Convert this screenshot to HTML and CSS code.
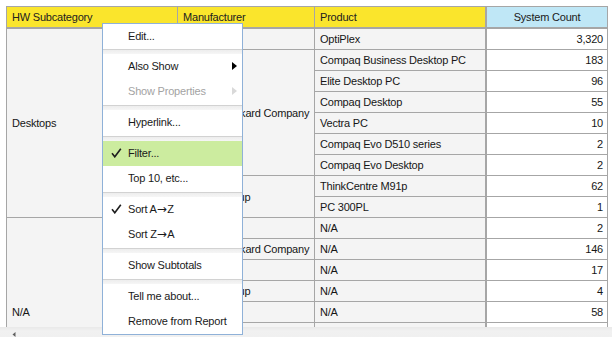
FILE: index.html
```html
<!DOCTYPE html>
<html>
<head>
<meta charset="utf-8">
<link rel="stylesheet" href="styles.css">
</head>
<body>
<div class="report">
  <div class="viewport">
    <div class="grid">
      <div class="hd">HW Subcategory</div>
      <div class="hd">Manufacturer</div>
      <div class="hd">Product</div>
      <div class="hd hd-measure">System Count</div>

      <div class="dim span9">Desktops</div>
      <div class="dim"></div>
      <div class="dim">OptiPlex</div>
      <div class="num">3,320</div>

      <div class="dim span6">Hewlett-Packard Company</div>
      <div class="dim">Compaq Business Desktop PC</div>
      <div class="num">183</div>
      <div class="dim">Elite Desktop PC</div>
      <div class="num">96</div>
      <div class="dim">Compaq Desktop</div>
      <div class="num">55</div>
      <div class="dim">Vectra PC</div>
      <div class="num">10</div>
      <div class="dim">Compaq Evo D510 series</div>
      <div class="num">2</div>
      <div class="dim">Compaq Evo Desktop</div>
      <div class="num">2</div>

      <div class="dim span2">Lenovo Group</div>
      <div class="dim">ThinkCentre M91p</div>
      <div class="num">62</div>
      <div class="dim">PC 300PL</div>
      <div class="num">1</div>

      <div class="dim span9">N/A</div>
      <div class="dim"></div>
      <div class="dim">N/A</div>
      <div class="num">2</div>
      <div class="dim">Hewlett-Packard Company</div>
      <div class="dim">N/A</div>
      <div class="num">146</div>
      <div class="dim"></div>
      <div class="dim">N/A</div>
      <div class="num">17</div>
      <div class="dim">Lenovo Group</div>
      <div class="dim">N/A</div>
      <div class="num">4</div>
      <div class="dim"></div>
      <div class="dim">N/A</div>
      <div class="num">58</div>
      <div class="dim"></div>
      <div class="dim"></div>
      <div class="num"></div>
      <div class="dim"></div>
      <div class="dim"></div>
      <div class="num"></div>
      <div class="dim"></div>
      <div class="dim"></div>
      <div class="num"></div>
      <div class="dim"></div>
      <div class="dim"></div>
      <div class="num"></div>
    </div>
  </div>
  <div class="hscroll">
    <svg class="hscroll-arrow" width="4" height="5" viewBox="0 0 4 5"><path d="M3.5 0 L0.5 2.5 L3.5 5 Z" fill="#606060"/></svg>
  </div>

  <div class="menu">
    <div class="item">Edit...</div>
    <div class="sep"></div>
    <div class="item">Also Show<span class="arrow"></span></div>
    <div class="item disabled">Show Properties<span class="arrow"></span></div>
    <div class="sep"></div>
    <div class="item">Hyperlink...</div>
    <div class="sep"></div>
    <div class="item active"><svg class="check" width="11" height="10" viewBox="0 0 11 10"><path d="M1 5.2 L3.8 8.8 L9.8 0.8" fill="none" stroke="#1e1e1e" stroke-width="1.6"/></svg>Filter...</div>
    <div class="item">Top 10, etc...</div>
    <div class="sep"></div>
    <div class="item"><svg class="check" width="11" height="10" viewBox="0 0 11 10"><path d="M1 5.2 L3.8 8.8 L9.8 0.8" fill="none" stroke="#1e1e1e" stroke-width="1.6"/></svg>Sort A<span class="to">→</span>Z</div>
    <div class="item">Sort Z<span class="to">→</span>A</div>
    <div class="sep"></div>
    <div class="item">Show Subtotals</div>
    <div class="sep"></div>
    <div class="item">Tell me about...</div>
    <div class="item">Remove from Report</div>
  </div>
</div>
</body>
</html>
```

FILE: styles.css
```css
html, body {
  margin: 0;
  padding: 0;
  background: #ffffff;
}

body {
  font-family: "Liberation Sans", Arial, sans-serif;
  font-size: 11px;
  letter-spacing: -0.2px;
  color: #161616;
}

.report {
  position: relative;
  width: 612px;
  height: 337px;
  overflow: hidden;
}

.viewport {
  height: 327px;
  box-sizing: border-box;
  padding: 6px 0 0 6px;
  overflow: hidden;
}

.grid {
  display: grid;
  grid-template-columns: 170px 136px 170px 121px;
  grid-template-rows: 21px;
  grid-auto-rows: 20px;
  gap: 1px;
  width: max-content;
  background: #a6a6a6;
  border: 1px solid #a6a6a6;
}

.hd {
  background: #fae52c;
  border-bottom: 1px solid #a6a6a6;
  padding-left: 5px;
  line-height: 20px;
  color: #202020;
  white-space: nowrap;
}

.hd-measure {
  background: #bfe7f6;
  border-left: 1px solid #a6a6a6;
  padding-left: 0;
  text-align: center;
}

.dim {
  background: #f4f4f4;
  padding-left: 5px;
  display: flex;
  align-items: center;
  white-space: nowrap;
  overflow: hidden;
}

.num {
  background: #ffffff;
  border-left: 1px solid #a6a6a6;
  padding-right: 4px;
  text-align: right;
  line-height: 20px;
}

.span9 { grid-row: span 9; }
.span6 { grid-row: span 6; }
.span2 { grid-row: span 2; }

.hscroll {
  position: relative;
  height: 10px;
  background: linear-gradient(#e9e9e9, #f1f1f1 40%, #f0f0f0);
}

.hscroll-arrow {
  position: absolute;
  left: 12px;
  top: 5px;
}

.menu {
  position: absolute;
  left: 102px;
  top: 23px;
  width: 141px;
  height: 312px;
  box-sizing: border-box;
  border: 1px solid #8fb1d8;
  background: #ffffff;
}

.item {
  position: relative;
  height: 25px;
  line-height: 25px;
  padding-left: 25px;
  color: #1a1a1a;
  white-space: nowrap;
}

.item:first-child {
  height: 24px;
  line-height: 25px;
}

.item.active {
  background: #ccec9f;
}

.item.disabled {
  color: #a3a3a3;
}

.to {
  font-family: "DejaVu Sans", sans-serif;
  font-size: 12px;
  letter-spacing: 0;
  margin: 0 0.5px 0 0;
}

.sep {
  margin-top: 1px;
  height: 4px;
  border-top: 1px solid #d2d2d2;
  background: linear-gradient(#ededed, #f6f6f6);
}

.check {
  position: absolute;
  left: 8px;
  top: 7px;
}

.arrow {
  position: absolute;
  left: 129px;
  top: 8px;
  width: 0;
  height: 0;
  border-top: 4px solid transparent;
  border-bottom: 4px solid transparent;
  border-left: 5px solid #000000;
}

.disabled .arrow {
  border-left-color: #d9d9d9;
}
```
